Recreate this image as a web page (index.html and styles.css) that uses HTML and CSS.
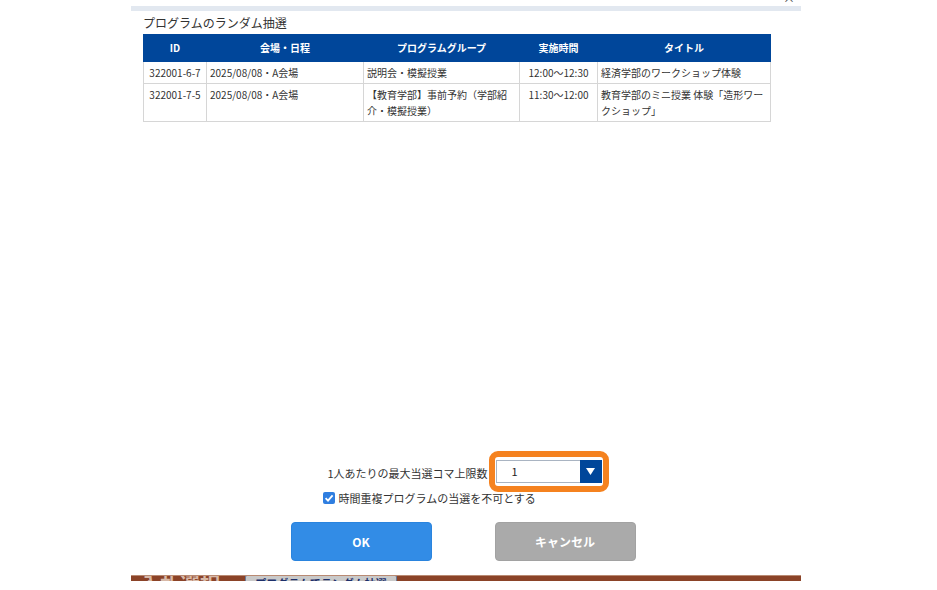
FILE: index.html
```html
<!DOCTYPE html>
<html lang="ja">
<head>
<meta charset="utf-8">
<link rel="stylesheet" href="styles.css">
</head>
<body>
<div class="stage">
  <div class="close">×</div>
  <div class="strip"></div>
  <div class="dialog">
    <div class="title">プログラムのランダム抽選</div>
    <table class="grid">
      <colgroup>
        <col class="c-id"><col class="c-venue"><col class="c-group"><col class="c-time"><col class="c-title">
      </colgroup>
      <thead>
        <tr><th>ID</th><th>会場・日程</th><th>プログラムグループ</th><th>実施時間</th><th>タイトル</th></tr>
      </thead>
      <tbody>
        <tr>
          <td class="center">322001-6-7</td>
          <td>2025/08/08・A会場</td>
          <td>説明会・模擬授業</td>
          <td class="center">12:00〜12:30</td>
          <td>経済学部のワークショップ体験</td>
        </tr>
        <tr>
          <td class="center">322001-7-5</td>
          <td>2025/08/08・A会場</td>
          <td>【教育学部】事前予約（学部紹介・模擬授業）</td>
          <td class="center">11:30〜12:00</td>
          <td>教育学部のミニ授業 体験「造形ワークショップ」</td>
        </tr>
      </tbody>
    </table>
    <div class="spacer"></div>
    <div class="form">
      <div class="form-block">
        <div class="limit-row">
          <span class="limit-label">1人あたりの最大当選コマ上限数</span>
          <div class="ring">
            <div class="select">
              <span class="select-value">1</span>
              <span class="select-arrow"><svg width="9" height="7" viewBox="0 0 9 7"><path d="M0 0H9L4.5 7Z" fill="#fff"/></svg></span>
            </div>
          </div>
        </div>
        <label class="check-row">
          <span class="checkbox"><svg width="12" height="12" viewBox="0 0 12 12"><path d="M2.6 6.2L5 8.6L9.6 3.4" fill="none" stroke="#fff" stroke-width="1.8"/></svg></span>
          <span>時間重複プログラムの当選を不可とする</span>
        </label>
      </div>
      <div class="buttons">
        <button class="btn ok">OK</button>
        <button class="btn cancel">キャンセル</button>
      </div>
    </div>
  </div>
  <div class="band">
    <span class="band-title">入札選択</span>
    <span class="band-btn">プログラムでランダム抽選</span>
  </div>
</div>
</body>
</html>
```
FILE: styles.css
```css
* { box-sizing: border-box; }
html, body { margin: 0; padding: 0; background: #fff; }
body {
  font-family: "Noto Sans CJK JP", "Noto Sans", sans-serif;
  color: #222;
  width: 937px;
  height: 590px;
  overflow: hidden;
}
.stage {
  position: relative;
  margin-left: 131px;
  width: 670px;
  padding-top: 6px;
}
.close {
  position: absolute;
  left: 652px;
  top: -8px;
  font-size: 12px;
  line-height: 12px;
  color: #444;
}
.strip {
  height: 5px;
  background: #e2e8f0;
}
.dialog {
  height: 564px;
  background: #fff;
  display: flex;
  flex-direction: column;
  padding: 4px 0 14px 12px;
}
.title {
  font-size: 12px;
  line-height: 16px;
  color: #333;
  margin-bottom: 3px;
}
.grid {
  border-collapse: collapse;
  width: 627px;
  table-layout: fixed;
  font-size: 10px;
  color: #333;
}
.c-id { width: 63px; }
.c-venue { width: 157px; }
.c-group { width: 156px; }
.c-time { width: 78px; }
.c-title { width: 173px; }
.grid th {
  background: #00469a;
  color: #fff;
  font-weight: bold;
  height: 27px;
  padding: 0 4px;
  border: 1px solid #00469a;
  border-left-color: #6d8fbd;
  line-height: 14px;
}
.grid th:first-child { border-left-color: #00469a; }
.grid td {
  border: 1px solid #d6d6d6;
  padding: 3px 3px 2px 3px;
  line-height: 16px;
  vertical-align: top;
}
.grid td.center { text-align: center; }
.spacer { flex: 1; }
.form {
  display: flex;
  flex-direction: column;
  align-items: center;
  padding-right: 12px;
}
.form-block {
  width: 287px;
  display: flex;
  flex-direction: column;
}
.limit-row {
  display: flex;
  align-items: center;
  padding-left: 5px;
}
.limit-label {
  font-size: 11px;
  line-height: 16px;
  color: #333;
  margin-right: 1px;
  margin-top: 2px;
}
.ring {
  border: 6px solid #f5821f;
  border-radius: 9px;
  padding: 3px 1px;
}
.select {
  width: 106px;
  height: 23px;
  display: flex;
  border: 1px solid #a9b4c2;
  background: #fff;
}
.select-value {
  flex: 1;
  font-size: 11px;
  line-height: 21px;
  padding-left: 15px;
  color: #222;
}
.select-arrow {
  width: 22px;
  background: #00469a;
  display: flex;
  align-items: center;
  justify-content: center;
  margin: -1px -1px -1px 0;
}
.check-row {
  display: flex;
  align-items: center;
  gap: 4px;
  font-size: 11px;
  line-height: 16px;
  color: #333;
  margin-top: -2px;
}
.checkbox {
  width: 12px;
  height: 12px;
  border-radius: 2px;
  background: #2f7ee0;
  display: flex;
}
.buttons {
  display: flex;
  gap: 63px;
  margin-top: 16px;
  margin-right: 6px;
}
.btn {
  width: 141px;
  height: 39px;
  border: 1px solid transparent;
  border-radius: 4px;
  font-family: "Noto Sans CJK JP", "Noto Sans", sans-serif;
  font-size: 12px;
  font-weight: bold;
  color: #fff;
}
.btn.ok { background: #328ce6; border-color: #2a84de; }
.btn.cancel { background: #aaaaaa; border-color: #a2a2a2; }
.band {
  height: 6px;
  background: #8b4328;
  overflow: hidden;
  display: flex;
  align-items: flex-start;
  border-top: 1px solid #b98a73;
}
.band-title {
  margin-left: 9px;
  width: 105px;
  flex: none;
  margin-top: -2px;
  font-size: 20px;
  line-height: 20px;
  color: #d8b9a8;
  font-weight: bold;
  white-space: nowrap;
  overflow: hidden;
}
.band-btn {
  flex: none;
  margin-top: -1px;
  width: 152px;
  height: 20px;
  background: #c9c9c9;
  border: 1px solid #6a7a99;
  border-radius: 2px;
  font-size: 11px;
  line-height: 14px;
  text-align: center;
  color: #1d2f6a;
  font-weight: bold;
}
```
